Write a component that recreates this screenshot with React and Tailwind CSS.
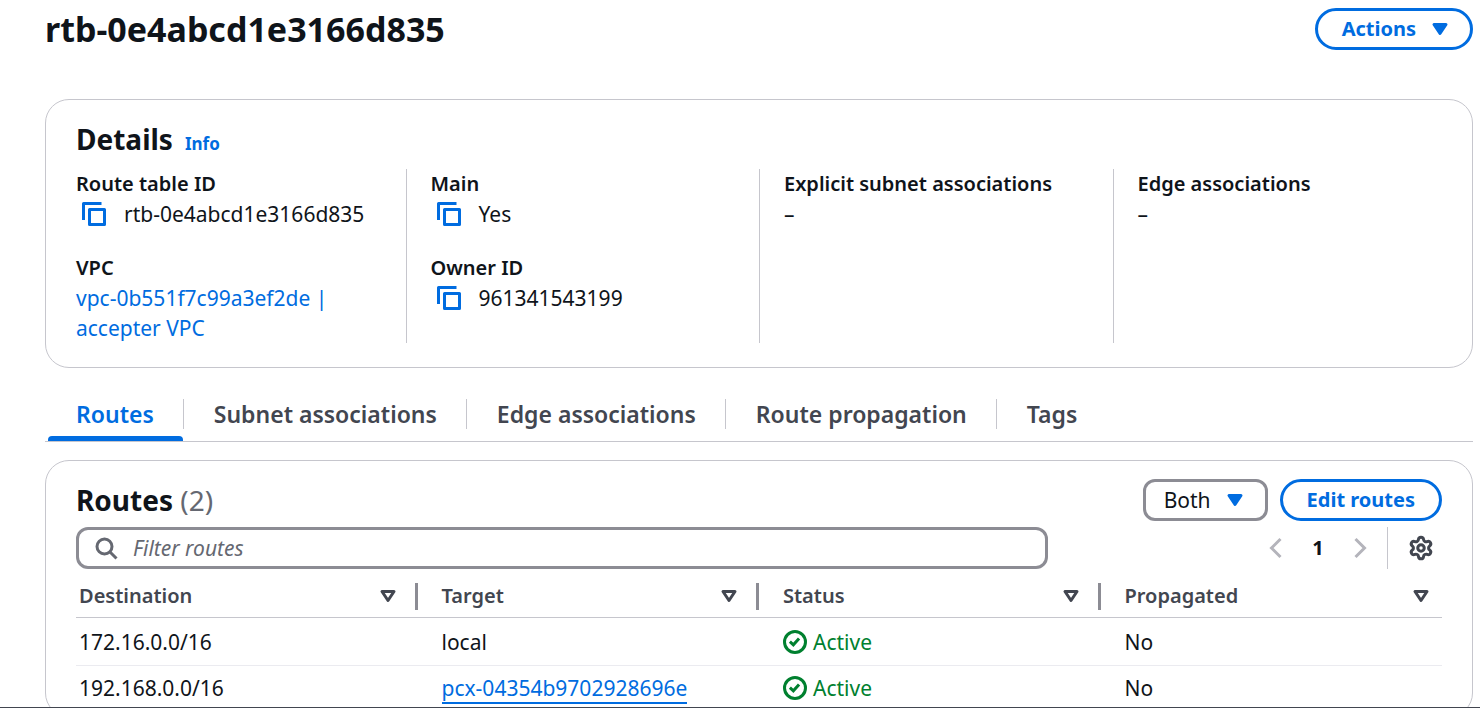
import React from "react";
import { Settings } from "lucide-react";

function Caret({ filled, className = "" }) {
  return (
    <svg viewBox="0 0 16 16" className={`size-6 shrink-0 ${className}`} fill={filled ? "currentColor" : "none"} stroke="currentColor" strokeWidth="2" strokeLinejoin="round" aria-hidden="true">
      <path d="M4 5h8l-4 6-4-6Z" />
    </svg>
  );
}

function CopyButton({ label }) {
  return (
    <button type="button" aria-label={label} className="mr-[18px] ml-1.5 h-6 w-6 shrink-0 text-[#006ce0]">
      <svg viewBox="0 0 16 16" className="size-6" fill="none" stroke="currentColor" strokeWidth="2" strokeLinejoin="round" aria-hidden="true">
        <path d="M15 5H5v10h10V5Z" />
        <path d="M13 1H1v11" />
      </svg>
    </button>
  );
}

function Chevron({ flip }) {
  return (
    <svg viewBox="0 0 16 16" className="size-6" fill="none" stroke="currentColor" strokeWidth="2" aria-hidden="true">
      <path d={flip ? "M5 2l6 6-6 6" : "M11 2L5 8l6 6"} />
    </svg>
  );
}

function Field({ label, copy, children }) {
  return (
    <div>
      <dt className="text-[20px] leading-[30px] font-semibold">{label}</dt>
      <dd className="flex items-center">
        {copy && <CopyButton label={`Copy ${label}`} />}
        {children}
      </dd>
    </div>
  );
}

function Status() {
  return (
    <span className="flex items-center gap-1.5 text-[#00802f]">
      <svg viewBox="0 0 16 16" className="size-6" fill="none" stroke="currentColor" strokeWidth="2" aria-hidden="true">
        <circle cx="8" cy="8" r="7" />
        <path d="m4.6 7.8 2.3 2.1 3.8-4.2" strokeWidth="2" />
      </svg>
      Active
    </span>
  );
}

const tabs = ["Routes", "Subnet associations", "Edge associations", "Route propagation", "Tags"];
const columns = ["Destination", "Target", "Status", "Propagated"];
const routes = [
  { destination: "172.16.0.0/16", target: "local" },
  { destination: "192.168.0.0/16", target: "pcx-04354b9702928696e", link: true },
];

const columnClass = "flex flex-col gap-6 border-[#c6c6cd] not-first:-ml-6 not-first:border-l not-first:pl-6";

export default function App() {
  return (
    <main className="h-screen overflow-hidden border-b border-[#424650] bg-white pt-2 pr-[7px] pl-[45px] font-['Noto_Sans','Open_Sans',sans-serif] text-[21px] leading-[30px] text-[#0f141a]">
      <header className="flex items-center justify-between">
        <h1 className="text-[34px] leading-[42px] font-bold">rtb-0e4abcd1e3166d835</h1>
        <button type="button" className="flex h-[42px] items-center gap-3 rounded-full border-3 border-[#006ce0] pr-[18px] pl-6 text-[20px] font-bold text-[#006ce0]">
          Actions
          <Caret filled />
        </button>
      </header>

      <section className="mt-[49px] rounded-3xl border border-[#c6c6cd] px-[30px] pt-[21px] pb-6">
        <div className="flex items-baseline gap-3">
          <h2 className="text-[28px] leading-9 font-bold">Details</h2>
          <a href="#info" className="text-[17px] leading-6 font-bold text-[#006ce0]">Info</a>
        </div>
        <dl className="mt-3 grid grid-cols-4 gap-x-12">
          <div className={columnClass}>
            <Field label="Route table ID" copy>rtb-0e4abcd1e3166d835</Field>
            <Field label="VPC">
              <a href="#vpc" className="text-[#006ce0]">vpc-0b551f7c99a3ef2de | accepter VPC</a>
            </Field>
          </div>
          <div className={columnClass}>
            <Field label="Main" copy>Yes</Field>
            <Field label="Owner ID" copy>961341543199</Field>
          </div>
          <div className={columnClass}>
            <Field label="Explicit subnet associations">–</Field>
          </div>
          <div className={columnClass}>
            <Field label="Edge associations">–</Field>
          </div>
        </dl>
      </section>

      <nav role="tablist" className="mt-[31px] flex h-[43px] items-start border-b border-[#c6c6cd] text-[23px] font-semibold text-[#424650]">
        {tabs.map((tab, i) => (
          <button
            key={tab}
            type="button"
            role="tab"
            aria-selected={i === 0}
            className="group relative ml-[3px] h-[42px] pr-[29px] pl-7 first:text-[#006ce0] not-last:after:absolute not-last:after:top-0 not-last:after:-right-px not-last:after:h-[30px] not-last:after:w-px not-last:after:bg-[#c6c6cd]"
          >
            <span className="block h-[42px] leading-[30px]">{tab}</span>
            <span className="absolute inset-x-0 bottom-0 hidden h-[5px] rounded-t-sm bg-[#006ce0] group-first:block" />
          </button>
        ))}
      </nav>

      <section className="mt-[18px] rounded-3xl border border-[#c6c6cd] px-[30px] pt-[18px] pb-1.5">
        <div className="flex items-center">
          <h2 className="mr-auto text-[28px] leading-9 font-bold">
            Routes <span className="font-normal text-[#656871]">(2)</span>
          </h2>
          <button type="button" aria-haspopup="listbox" className="mr-3 flex h-[42px] items-center gap-3 rounded-xl border-3 border-[#8c8c94] px-[18px]">
            Both
            <Caret filled className="text-[#006ce0]" />
          </button>
          <button type="button" className="h-[42px] rounded-full border-3 border-[#006ce0] px-6 text-[20px] font-bold text-[#006ce0]">Edit routes</button>
        </div>

        <div className="mt-1.5 flex items-center">
          <label className="flex h-[42px] flex-1 items-center gap-[15px] rounded-xl border-3 border-[#8c8c94] pl-[15px] text-[#656871]">
            <svg viewBox="0 0 16 16" className="size-6 shrink-0" fill="none" stroke="currentColor" strokeWidth="2" aria-hidden="true">
              <circle cx="7" cy="7" r="5" />
              <path d="m15 15-4.5-4.5" />
            </svg>
            <input type="search" aria-label="Filter routes" placeholder="Filter routes" className="min-w-0 flex-1 bg-transparent italic outline-none placeholder:text-[#656871]" />
          </label>
          <div className="flex w-[394px] items-center justify-end">
            <button type="button" aria-label="Previous page" className="size-6 text-[#b4b4bb]"><Chevron /></button>
            <button type="button" className="w-[60px] text-[20px] font-bold">1</button>
            <button type="button" aria-label="Next page" className="size-6 text-[#b4b4bb]"><Chevron flip /></button>
            <span className="ml-[15px] h-[42px] w-px bg-[#c6c6cd]" />
            <button type="button" aria-label="Preferences" className="mr-2 ml-5 text-[#424650]">
              <Settings className="size-[26px]" strokeWidth={2.8} />
            </button>
          </div>
        </div>

        <table className="w-full table-fixed border-separate border-spacing-0 text-left">
          <thead>
            <tr>
              {columns.map((column) => (
                <th key={column} scope="col" className="group h-[49px] border-b border-[#c6c6cd] p-0 pt-1.5 pl-6 align-middle text-[20px] font-semibold text-[#424650] first:pl-[3px]">
                  <div className="flex items-center">
                    <span className="mr-auto">{column}</span>
                    <button type="button" aria-label={`Sort by ${column}`} className="mr-[15px] group-last:mr-[9px]">
                      <Caret />
                    </button>
                    <span className="h-[27px] w-[3px] bg-[#8c8c94] group-last:hidden" />
                  </div>
                </th>
              ))}
            </tr>
          </thead>
          <tbody>
            {routes.map((route) => (
              <tr key={route.destination} className="*:h-11 *:border-[#ebebf0] *:pl-6 *:first:pl-[3px] first:*:h-12 first:*:border-b">
                <td>{route.destination}</td>
                <td>{route.link ? <a href="#peering" className="border-b-2 border-[#006ce0] text-[#006ce0]">{route.target}</a> : route.target}</td>
                <td><Status /></td>
                <td>No</td>
              </tr>
            ))}
          </tbody>
        </table>
      </section>
    </main>
  );
}
